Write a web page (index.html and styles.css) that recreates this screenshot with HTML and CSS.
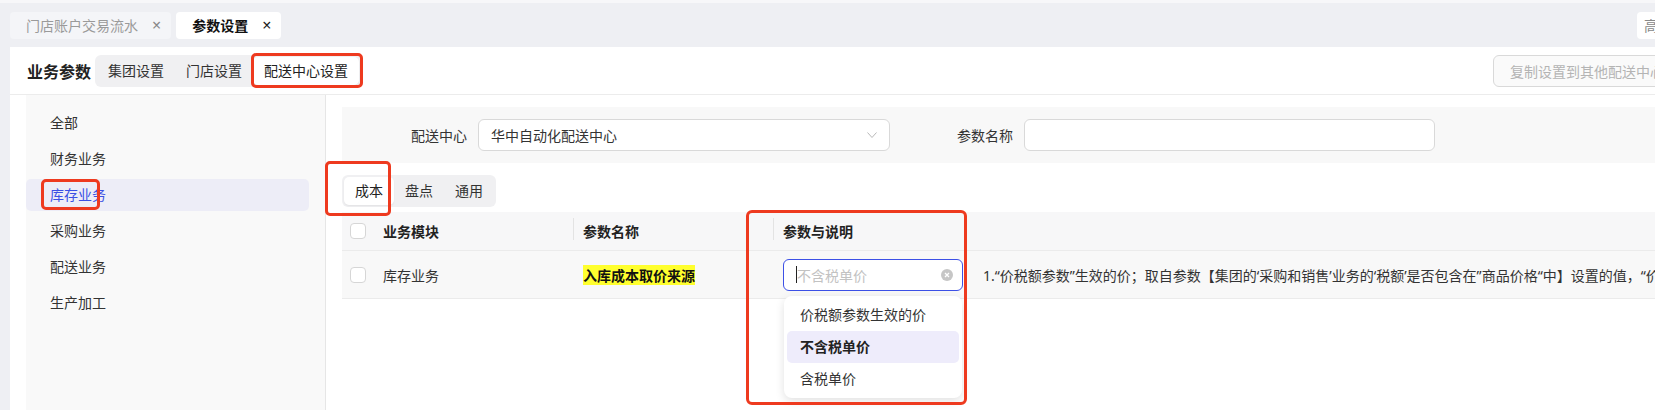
FILE: index.html
```html
<!DOCTYPE html>
<html lang="zh-CN">
<head>
    <meta charset="UTF-8">
    <title>参数设置</title>
    <link rel="stylesheet" href="styles.css">
</head>
<body>
<div class="page">
    <div class="topline"></div>

    <!-- 页签 -->
    <div class="tabbar">
        <div class="tab">门店账户交易流水<span class="tab-close">&times;</span></div>
        <div class="tab tab-active">参数设置<span class="tab-close">&times;</span></div>
        <div class="tab tab-extra">高级</div>
    </div>

    <div class="card">
        <div class="card-head">
            <h2 class="card-title">业务参数</h2>
            <div class="segment">
                <span class="segment-item">集团设置</span>
                <span class="segment-item">门店设置</span>
                <span class="segment-item segment-active">配送中心设置<i class="mark mark-scope"></i></span>
            </div>
            <button class="copy-btn" disabled>复制设置到其他配送中心</button>
        </div>

        <div class="card-body">
            <ul class="side-menu">
                <li class="side-item">全部</li>
                <li class="side-item">财务业务</li>
                <li class="side-item side-active">库存业务<i class="mark mark-menu"></i></li>
                <li class="side-item">采购业务</li>
                <li class="side-item">配送业务</li>
                <li class="side-item">生产加工</li>
            </ul>

            <div class="main">
                <div class="filter">
                    <label class="filter-label">配送中心</label>
                    <div class="select-box">
                        <span>华中自动化配送中心</span>
                        <svg class="chevron" width="10" height="6" viewBox="0 0 10 6"><polyline points="0.5,0.5 5,5.5 9.5,0.5" fill="none" stroke="#b8b8b8" stroke-width="1"/></svg>
                    </div>
                    <label class="filter-label">参数名称</label>
                    <div class="text-box"></div>
                </div>

                <div class="segment segment-sub">
                    <span class="segment-item segment-active">成本<i class="mark mark-tab"></i></span>
                    <span class="segment-item">盘点</span>
                    <span class="segment-item">通用</span>
                </div>

                <div class="table">
                    <div class="tr thead">
                        <div class="td td-first"><span class="checkbox"></span>业务模块</div>
                        <div class="td td-split">参数名称</div>
                        <div class="td td-split">参数与说明<i class="mark mark-column"></i></div>
                        <div class="td"></div>
                    </div>
                    <div class="tr">
                        <div class="td td-first"><span class="checkbox"></span>库存业务</div>
                        <div class="td"><span class="hl">入库成本取价来源</span></div>
                        <div class="td">
                            <div class="picker">
                                <div class="picker-input">
                                    <span class="caret"></span><span class="placeholder">不含税单价</span>
                                    <svg class="clear" width="12" height="12" viewBox="0 0 12 12"><circle cx="6" cy="6" r="6" fill="#c6c6c6"/><path d="M4 4 L8 8 M8 4 L4 8" stroke="#fff" stroke-width="1.3"/></svg>
                                </div>
                                <ul class="dropdown">
                                    <li class="option">价税额参数生效的价</li>
                                    <li class="option option-on">不含税单价</li>
                                    <li class="option">含税单价</li>
                                </ul>
                            </div>
                        </div>
                        <div class="td td-desc">1.“价税额参数”生效的价；取自参数【集团的‘采购和销售’业务的‘税额’是否包含在”商品价格“中】设置的值，“价</div>
                    </div>
                </div>
            </div>
        </div>
    </div>
</div>
</body>
</html>
```

FILE: styles.css
```css
* {
    box-sizing: border-box;
}
body {
    margin: 0;
    background-color: #eeeff3;
    font-family: "Noto Sans", "Noto Sans CJK SC", sans-serif;
    font-size: 14px;
    color: #333;
    overflow: hidden;
}
.page {
    width: 1700px;
    height: 410px;
}
.topline {
    height: 3px;
    background-color: #f7f7f9;
}

/* 页签 */
.tabbar {
    display: flex;
    align-items: center;
    gap: 5px;
    height: 44px;
    padding: 0 3px 0 10px;
}
.tab {
    display: flex;
    align-items: center;
    height: 27px;
    padding: 0 10px 0 16px;
    border-radius: 4px;
    background-color: #f4f5f8;
    color: #9a9a9a;
}
.tab-close {
    margin-left: 14px;
    font-size: 16px;
    color: #888;
}
.tab-active {
    background-color: #fff;
    color: #111;
    font-weight: 600;
}
.tab-active .tab-close {
    color: #222;
    font-weight: 400;
}
.tab-extra {
    margin-left: auto;
    width: 60px;
    padding-left: 7px;
    background-color: #fff;
    color: #888;
}

/* 卡片 */
.card {
    margin-left: 10px;
    background-color: #fff;
    height: 370px;
}
.card-head {
    display: flex;
    align-items: center;
    gap: 4px;
    height: 48px;
    padding: 0 19px 0 17px;
    border-bottom: 1px solid #ececec;
}
.card-title {
    margin: 0;
    font-size: 16px;
    font-weight: 600;
    color: #222;
}
.segment {
    display: flex;
    padding: 2px;
    border-radius: 6px;
    background-color: #f0f0f2;
}
.segment-item {
    position: relative;
    height: 28px;
    line-height: 28px;
    padding: 0 11px;
    border-radius: 5px;
    color: #333;
}
.segment-active {
    background-color: #fff;
    color: #222;
    box-shadow: 0 1px 2px rgba(0, 0, 0, 0.06);
}
.copy-btn {
    margin-left: auto;
    height: 32px;
    padding: 0 16px;
    border: 1px solid #d9d9d9;
    border-radius: 6px;
    background-color: #fafafa;
    color: #b4b4b4;
    font-family: inherit;
    font-size: 14px;
}

/* 标注框 */
.mark {
    position: absolute;
    border: 3px solid #ee3a1f;
    border-radius: 5px;
    pointer-events: none;
    z-index: 10;
}
.mark-scope {
    left: -2px;
    top: -4px;
    width: 112px;
    height: 35px;
}
.mark-menu {
    left: 15px;
    top: 0;
    width: 59px;
    height: 31px;
}
.mark-tab {
    left: -19px;
    top: -16px;
    width: 66px;
    height: 55px;
}
.mark-column {
    left: -27px;
    top: -11px;
    width: 221px;
    height: 195px;
    border-radius: 6px;
}

/* 左侧菜单 */
.card-body {
    display: flex;
    height: 322px;
    padding-left: 16px;
}
.side-menu {
    flex: 0 0 300px;
    margin: 0;
    padding: 12px 16px 0 0;
    list-style: none;
    background-color: #f9f9f9;
    border-right: 1px solid #e6e6e6;
}
.side-item {
    position: relative;
    height: 32px;
    line-height: 32px;
    margin-bottom: 4px;
    padding-left: 24px;
    border-radius: 5px;
    color: #333;
}
.side-active {
    background-color: #ededf7;
    color: #3b50e4;
}

/* 主区域 */
.main {
    flex: 1;
    min-width: 0;
    padding: 12px 0 0 16px;
}
.filter {
    display: flex;
    align-items: center;
    height: 56px;
    background-color: #f8f8f8;
}
.filter-label {
    flex: 0 0 136px;
    padding-right: 11px;
    text-align: right;
    color: #333;
}
.select-box, .text-box {
    display: flex;
    align-items: center;
    height: 32px;
    border: 1px solid #d9d9d9;
    border-radius: 6px;
    background-color: #fff;
}
.select-box {
    flex: 0 0 412px;
    padding: 0 12px;
    justify-content: space-between;
    color: #333;
}
.select-box + .filter-label {
    flex-basis: 134px;
}
.text-box {
    flex: 0 0 411px;
}
.segment-sub {
    display: inline-flex;
    margin-top: 12px;
}

/* 表格 */
.table {
    margin-top: 5px;
}
.tr {
    display: grid;
    grid-template-columns: 231px 200px 200px 1fr;
    align-items: center;
    height: 48px;
    background-color: #f8f8f8;
    border-bottom: 1px solid #ebebeb;
}
.thead {
    height: 39px;
    background-color: #f7f7f8;
    font-weight: 600;
    color: #222;
}
.td {
    position: relative;
    display: flex;
    align-items: center;
    padding-left: 10px;
    white-space: nowrap;
}
.td-first {
    padding-left: 8px;
}
.td-split::before {
    content: "";
    position: absolute;
    left: 0;
    top: -3px;
    width: 1px;
    height: 22px;
    background-color: #e3e3e3;
}
.checkbox {
    width: 16px;
    height: 16px;
    margin-right: 17px;
    border: 1px solid #d6d6d6;
    border-radius: 4px;
    background-color: #fff;
}
.hl {
    background-color: #ffff2e;
    font-weight: 600;
    color: #111;
}
.td-desc {
    color: #333;
}

/* 下拉选择 */
.picker {
    position: relative;
    width: 180px;
}
.picker-input {
    display: flex;
    align-items: center;
    height: 32px;
    padding: 0 9px 0 12px;
    border: 1px solid #3c50e6;
    border-radius: 6px;
    background-color: #fff;
}
.caret {
    width: 1px;
    height: 17px;
    background-color: #222;
}
.placeholder {
    flex: 1;
    color: #c2c2c2;
}
.dropdown {
    position: absolute;
    left: 1px;
    top: 37px;
    width: 178px;
    margin: 0;
    padding: 3px;
    list-style: none;
    background-color: #fff;
    border-radius: 8px;
    box-shadow: 0 3px 10px rgba(0, 0, 0, 0.12);
    z-index: 5;
}
.option {
    height: 32px;
    line-height: 32px;
    padding-left: 13px;
    border-radius: 5px;
    color: #333;
}
.option-on {
    background-color: #eeecfb;
    font-weight: 600;
    color: #222;
}
```
